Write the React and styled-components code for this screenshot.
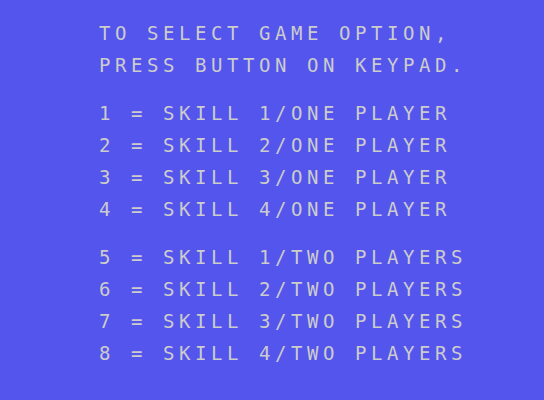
import React from 'react';
import styled, { createGlobalStyle } from 'styled-components';

const GlobalStyle = createGlobalStyle`
    html, body {
        margin: 0;
        padding: 0;
        background-color: #5455ed;
    }
`;

const Screen = styled.div`
    width: 544px;
    height: 400px;
    box-sizing: border-box;
    padding: 17px 0 0 99px;
    background-color: #5455ed;
    color: #cccccc;
    font-family: "DejaVu Sans Mono", "Liberation Mono", monospace;
    font-size: 19px;
    letter-spacing: 4.56px;
    overflow: hidden;
`;

const Block = styled.div`
    display: flex;
    flex-direction: column;
    margin-top: ${props => (props.first ? '0' : '16px')};
`;

const Line = styled.div`
    height: 32px;
    line-height: 32px;
    white-space: pre;
`;

const onePlayer = [1, 2, 3, 4];
const twoPlayers = [5, 6, 7, 8];

const App = () => (
    <>
        <GlobalStyle />
        <Screen>
            <Block first>
                <Line>TO SELECT GAME OPTION,</Line>
                <Line>PRESS BUTTON ON KEYPAD.</Line>
            </Block>
            <Block>
                {onePlayer.map(n => (
                    <Line key={n}>{`${n} = SKILL ${n}/ONE PLAYER`}</Line>
                ))}
            </Block>
            <Block>
                {twoPlayers.map(n => (
                    <Line key={n}>{`${n} = SKILL ${n - 4}/TWO PLAYERS`}</Line>
                ))}
            </Block>
        </Screen>
    </>
);

export default App;
